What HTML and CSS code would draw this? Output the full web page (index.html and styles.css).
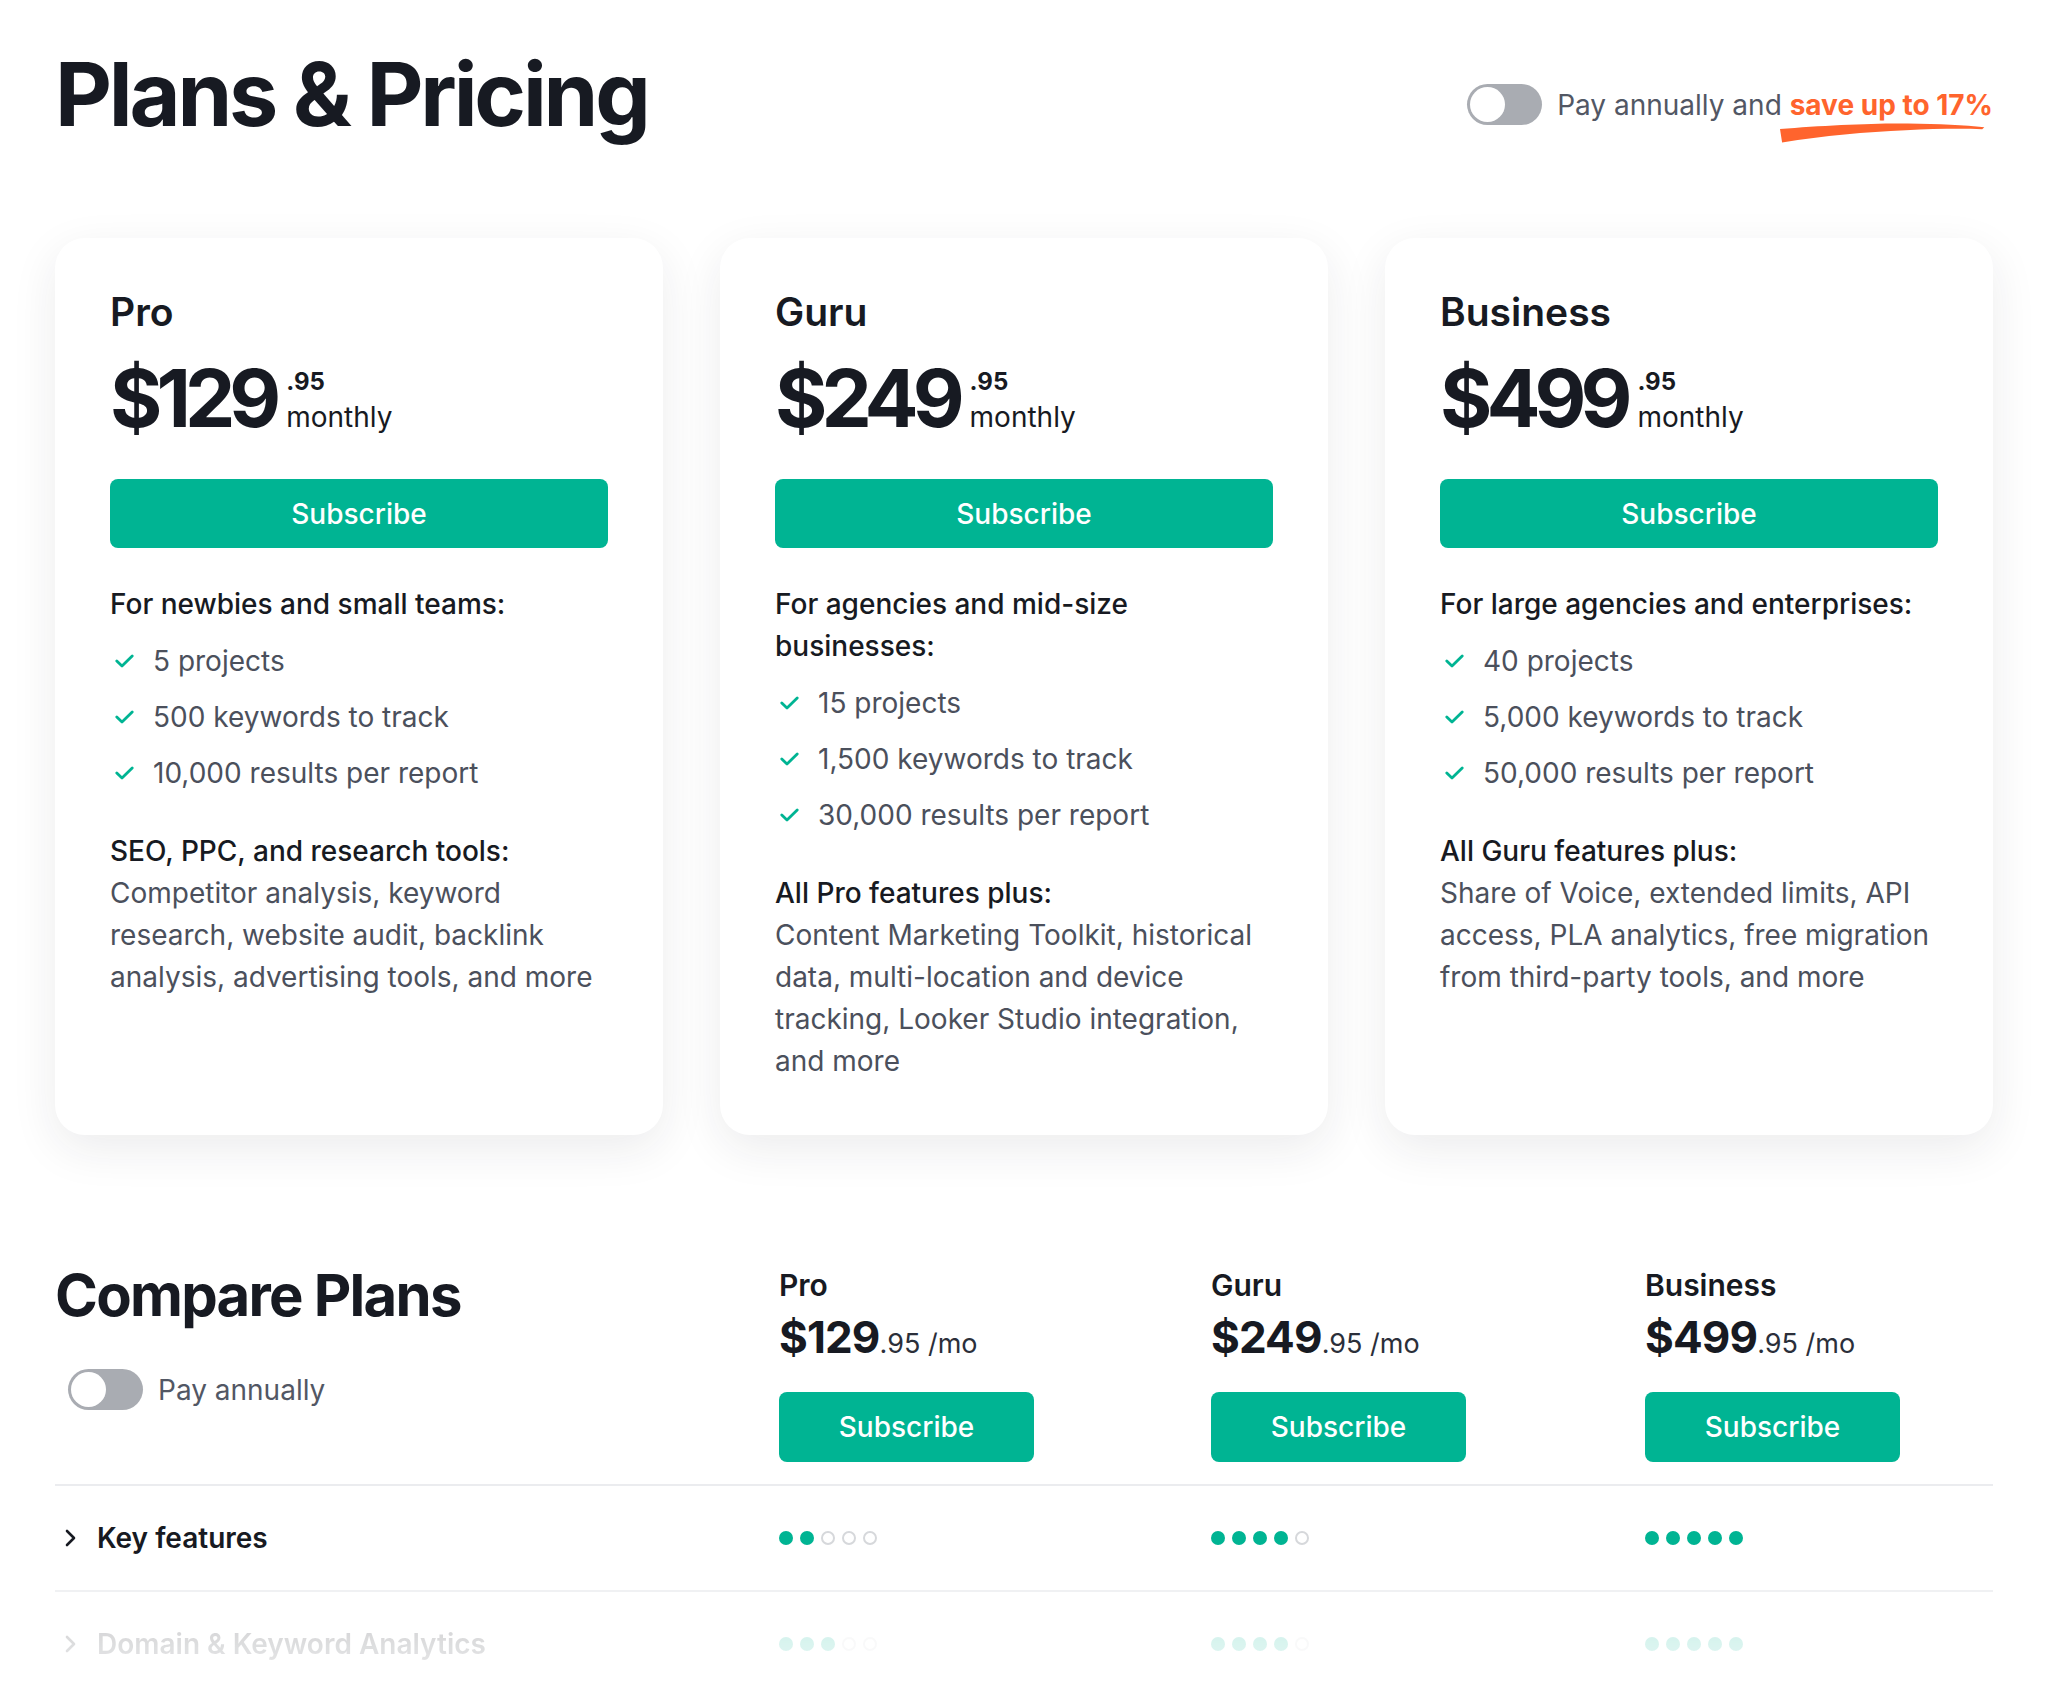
FILE: index.html
```html
<!DOCTYPE html>
<html lang="en">
<head>
<meta charset="utf-8">
<title>Plans &amp; Pricing</title>
<link rel="stylesheet" href="styles.css">
</head>
<body>
<main class="page">
  <header class="top">
    <h1 class="title">Plans &amp; Pricing</h1>
    <div class="annual">
      <span class="toggle"><span class="knob"></span></span>
      <span class="annual-text">Pay annually and <span class="save">save up to 17%<svg class="swoosh" viewBox="0 0 196 20" preserveAspectRatio="none" aria-hidden="true"><path d="M0 6 C40 2.5 90 0 122 0.5 C152 1 176 2 195 4.2 L193 6.2 C170 5.4 146 6 120 7.2 C82 9 42 12.5 2 19.5 Z" fill="#ff642d"/></svg></span></span>
    </div>
  </header>

  <section class="cards">
    <article class="card">
      <h2 class="plan">Pro</h2>
      <div class="price"><span class="amount">$129</span><span class="side"><span class="cents">.95</span><span class="period">monthly</span></span></div>
      <a class="btn" href="#">Subscribe</a>
      <p class="lead">For newbies and small teams:</p>
      <ul class="checks">
        <li><svg class="check" viewBox="0 0 19 14" width="19" height="14" aria-hidden="true"><polyline points="1.8,7 7,12 17.2,2" /></svg>5 projects</li>
        <li><svg class="check" viewBox="0 0 19 14" width="19" height="14" aria-hidden="true"><polyline points="1.8,7 7,12 17.2,2" /></svg>500 keywords to track</li>
        <li><svg class="check" viewBox="0 0 19 14" width="19" height="14" aria-hidden="true"><polyline points="1.8,7 7,12 17.2,2" /></svg>10,000 results per report</li>
      </ul>
      <p class="lead extra">SEO, PPC, and research tools:</p>
      <p class="desc">Competitor analysis, keyword research, website audit, backlink analysis, advertising tools, and more</p>
    </article>

    <article class="card">
      <h2 class="plan">Guru</h2>
      <div class="price"><span class="amount">$249</span><span class="side"><span class="cents">.95</span><span class="period">monthly</span></span></div>
      <a class="btn" href="#">Subscribe</a>
      <p class="lead">For agencies and mid-size businesses:</p>
      <ul class="checks">
        <li><svg class="check" viewBox="0 0 19 14" width="19" height="14" aria-hidden="true"><polyline points="1.8,7 7,12 17.2,2" /></svg>15 projects</li>
        <li><svg class="check" viewBox="0 0 19 14" width="19" height="14" aria-hidden="true"><polyline points="1.8,7 7,12 17.2,2" /></svg>1,500 keywords to track</li>
        <li><svg class="check" viewBox="0 0 19 14" width="19" height="14" aria-hidden="true"><polyline points="1.8,7 7,12 17.2,2" /></svg>30,000 results per report</li>
      </ul>
      <p class="lead extra">All Pro features plus:</p>
      <p class="desc">Content Marketing Toolkit, historical data, multi-location and device tracking, Looker Studio integration, and more</p>
    </article>

    <article class="card">
      <h2 class="plan">Business</h2>
      <div class="price"><span class="amount">$499</span><span class="side"><span class="cents">.95</span><span class="period">monthly</span></span></div>
      <a class="btn" href="#">Subscribe</a>
      <p class="lead">For large agencies and enterprises:</p>
      <ul class="checks">
        <li><svg class="check" viewBox="0 0 19 14" width="19" height="14" aria-hidden="true"><polyline points="1.8,7 7,12 17.2,2" /></svg>40 projects</li>
        <li><svg class="check" viewBox="0 0 19 14" width="19" height="14" aria-hidden="true"><polyline points="1.8,7 7,12 17.2,2" /></svg>5,000 keywords to track</li>
        <li><svg class="check" viewBox="0 0 19 14" width="19" height="14" aria-hidden="true"><polyline points="1.8,7 7,12 17.2,2" /></svg>50,000 results per report</li>
      </ul>
      <p class="lead extra">All Guru features plus:</p>
      <p class="desc">Share of Voice, extended limits, API access, PLA analytics, free migration from third-party tools, and more</p>
    </article>
  </section>

  <section class="compare">
    <div class="cmp-head">
      <div class="cmp-left">
        <h2 class="cmp-title">Compare Plans</h2>
        <div class="cmp-toggle"><span class="toggle"><span class="knob"></span></span><span>Pay annually</span></div>
      </div>
      <div class="cmp-plan">
        <div class="cmp-name">Pro</div>
        <div class="cmp-price">$129<span class="cmp-small">.95 /mo</span></div>
        <a class="btn cmp-btn" href="#">Subscribe</a>
      </div>
      <div class="cmp-plan">
        <div class="cmp-name">Guru</div>
        <div class="cmp-price">$249<span class="cmp-small">.95 /mo</span></div>
        <a class="btn cmp-btn" href="#">Subscribe</a>
      </div>
      <div class="cmp-plan">
        <div class="cmp-name">Business</div>
        <div class="cmp-price">$499<span class="cmp-small">.95 /mo</span></div>
        <a class="btn cmp-btn" href="#">Subscribe</a>
      </div>
    </div>

    <div class="cmp-row">
      <div class="row-label"><svg class="chev" viewBox="0 0 11 20" width="11" height="20" aria-hidden="true"><polyline points="2,3 9,10 2,17" /></svg>Key features</div>
      <div class="dots"><span class="dot"></span><span class="dot"></span><span class="dot off"></span><span class="dot off"></span><span class="dot off"></span></div>
      <div class="dots"><span class="dot"></span><span class="dot"></span><span class="dot"></span><span class="dot"></span><span class="dot off"></span></div>
      <div class="dots"><span class="dot"></span><span class="dot"></span><span class="dot"></span><span class="dot"></span><span class="dot"></span></div>
    </div>

    <div class="cmp-row faded">
      <div class="row-label"><svg class="chev" viewBox="0 0 11 20" width="11" height="20" aria-hidden="true"><polyline points="2,3 9,10 2,17" /></svg>Domain &amp; Keyword Analytics</div>
      <div class="dots"><span class="dot"></span><span class="dot"></span><span class="dot"></span><span class="dot off"></span><span class="dot off"></span></div>
      <div class="dots"><span class="dot"></span><span class="dot"></span><span class="dot"></span><span class="dot"></span><span class="dot off"></span></div>
      <div class="dots"><span class="dot"></span><span class="dot"></span><span class="dot"></span><span class="dot"></span><span class="dot"></span></div>
    </div>
  </section>
</main>
</body>
</html>
```

FILE: styles.css
```css
html, body {
  margin: 0;
  padding: 0;
  background: #ffffff;
}

body {
  font-family: Inter, "Noto Sans", "Liberation Sans", sans-serif;
  color: #171a22;
}

.page {
  padding: 0 55px;
  height: 1684px;
  overflow: hidden;
  box-sizing: border-box;
}

/* ---------- header ---------- */
.top {
  display: flex;
  justify-content: space-between;
  align-items: flex-start;
  padding-top: 46px;
}

.title {
  margin: 0;
  font-size: 88px;
  line-height: 97px;
  font-weight: 700;
  letter-spacing: -0.036em;
}

.annual {
  display: flex;
  align-items: center;
  gap: 15px;
  margin-top: 38px;
  font-size: 28px;
  color: #525764;
}

.toggle {
  display: flex;
  align-items: center;
  width: 75px;
  height: 41px;
  box-sizing: border-box;
  padding: 3px;
  border-radius: 21px;
  background: #a9acb2;
  flex: none;
}

.knob {
  width: 35px;
  height: 35px;
  border-radius: 50%;
  background: #ffffff;
}

.save {
  position: relative;
  color: #ff642d;
  font-weight: 700;
}

.swoosh {
  position: absolute;
  left: -10px;
  top: calc(100% + 1px);
  width: calc(100% + 2px);
  height: 20px;
}

/* ---------- cards ---------- */
.cards {
  display: grid;
  grid-template-columns: repeat(3, 1fr);
  gap: 57px;
  margin-top: 95px;
}

.card {
  background: #ffffff;
  border-radius: 30px;
  box-shadow: 0 14px 46px rgba(30, 36, 52, 0.085);
  padding: 52px 55px 53px;
}

.plan {
  margin: 0;
  font-size: 39px;
  line-height: 44px;
  font-weight: 600;
}

.price {
  display: flex;
  align-items: flex-end;
  margin-top: 24px;
}

.amount {
  font-size: 80px;
  line-height: 80px;
  font-weight: 700;
  letter-spacing: -0.075em;
}

.side {
  display: flex;
  flex-direction: column;
  margin-left: 11px;
  padding-bottom: 6px;
}

.cents {
  font-size: 24px;
  line-height: 24px;
  font-weight: 700;
}

.period {
  font-size: 28px;
  line-height: 30px;
  margin-top: 8px;
}

.btn {
  display: flex;
  align-items: center;
  justify-content: center;
  height: 69px;
  margin-top: 41px;
  background: #00b493;
  color: #ffffff;
  font-size: 28px;
  font-weight: 500;
  border-radius: 8px;
  text-decoration: none;
}

.lead {
  margin: 35px 0 0;
  font-size: 28px;
  line-height: 42px;
  font-weight: 500;
}

.lead.extra {
  margin-top: 36px;
}

.checks {
  list-style: none;
  margin: 15px 0 0;
  padding: 0;
}

.checks li {
  display: flex;
  align-items: center;
  font-size: 28px;
  line-height: 42px;
  color: #4b505c;
}

.checks li + li {
  margin-top: 14px;
}

.check {
  flex: none;
  margin: 0 19px 0 5px;
  fill: none;
  stroke: #00b493;
  stroke-width: 2.8;
  stroke-linecap: round;
  stroke-linejoin: round;
}

.desc {
  margin: 0;
  font-size: 28px;
  line-height: 42px;
  color: #4b505c;
}

/* ---------- compare ---------- */
.compare {
  margin-top: 125px;
}

.cmp-head,
.cmp-row {
  display: grid;
  grid-template-columns: 724px 432px 434px 1fr;
}

.cmp-head {
  padding-bottom: 22px;
  border-bottom: 2px solid #ebecef;
}

.cmp-title {
  margin: 0;
  font-size: 58px;
  line-height: 70px;
  font-weight: 700;
  letter-spacing: -0.03em;
}

.cmp-toggle {
  display: flex;
  align-items: center;
  gap: 15px;
  margin: 39px 0 0 13px;
  font-size: 28px;
  color: #525764;
}

.cmp-plan {
  padding-top: 7px;
}

.cmp-name {
  font-size: 30px;
  line-height: 36px;
  font-weight: 600;
}

.cmp-price {
  margin-top: 8px;
  font-size: 44px;
  line-height: 52px;
  font-weight: 700;
  letter-spacing: -0.02em;
}

.cmp-small {
  font-size: 27px;
  font-weight: 400;
  letter-spacing: 0;
  color: #2b2f3a;
}

.cmp-btn {
  width: 255px;
  height: 70px;
  margin-top: 22px;
}

.cmp-row {
  height: 104px;
  align-items: center;
  border-bottom: 2px solid #f0f1f3;
}

.row-label {
  display: flex;
  align-items: center;
  gap: 21px;
  padding-left: 10px;
  font-size: 28px;
  font-weight: 600;
}

.chev {
  flex: none;
  fill: none;
  stroke: #171a22;
  stroke-width: 2.6;
  stroke-linecap: round;
  stroke-linejoin: round;
}

.dots {
  display: flex;
  gap: 7px;
}

.dot {
  width: 14px;
  height: 14px;
  border-radius: 50%;
  background: #00b493;
  box-sizing: border-box;
}

.dot.off {
  background: transparent;
  border: 2px solid #d6d8db;
}

.cmp-row.faded {
  border-bottom: none;
  -webkit-mask-image: linear-gradient(to bottom, rgba(0, 0, 0, 0.24), rgba(0, 0, 0, 0.06));
  mask-image: linear-gradient(to bottom, rgba(0, 0, 0, 0.24), rgba(0, 0, 0, 0.06));
}
```
